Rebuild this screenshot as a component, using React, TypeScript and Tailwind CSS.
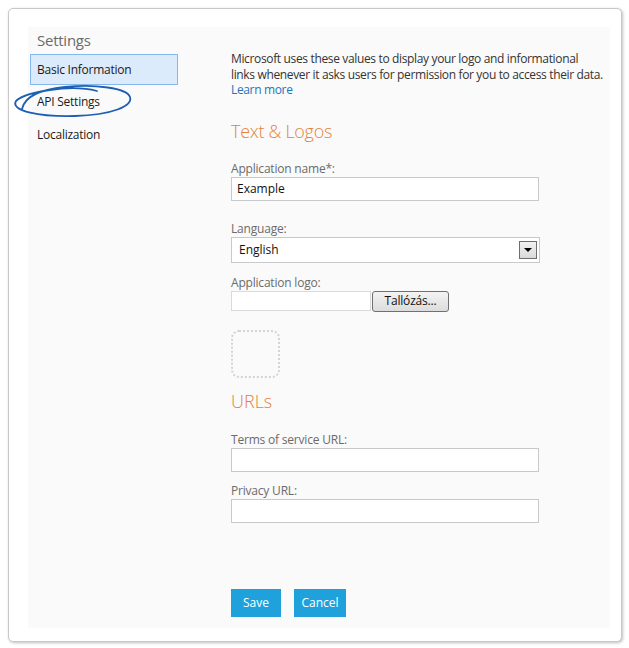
import React from "react";

const font = { fontFamily: '"Open Sans", "Noto Sans", Arial, sans-serif' };

function Field({ label, className = "", children }: { label: string; className?: string; children: React.ReactNode }) {
  return (
    <div className={className}>
      <div className="text-[12px] leading-[16px] tracking-[-0.2px] text-[#6b6b6b]">{label}</div>
      {children}
    </div>
  );
}

export default function App() {
  return (
    <div className="relative w-[629px] h-[648px] bg-white p-[8px]" style={font}>
      <div className="w-[614px] h-[634px] border border-[#c9c9c9] rounded-[5px] bg-white shadow-[1px_1px_3px_rgba(0,0,0,0.25)] pl-[19px] pr-[11px] pt-[18px] pb-[13px]">
        <div className="flex h-full bg-[#fafafa]">
          {/* Sidebar */}
          <div className="w-[203px] shrink-0 pt-[4px] tracking-[-0.25px]">
            <div className="pl-[9px] text-[15px] leading-[18px] text-[#6b6b6b]">Settings</div>
            <div className="ml-[2px] mt-[5px] w-[148px] h-[31px] border border-[#84b7ec] bg-[#dcebfc] flex items-center pl-[6px] text-[12px] text-[#1a1a1a]">
              Basic Information
            </div>
            <div className="pl-[9px] mt-[8px] h-[18px] flex items-center text-[12px] text-[#1a1a1a]">API Settings</div>
            <div className="pl-[9px] mt-[15px] h-[18px] flex items-center text-[12px] text-[#1a1a1a]">Localization</div>
          </div>

          {/* Main */}
          <div className="flex-1 pt-[24px]">
            <p className="text-[12px] leading-[15.5px] tracking-[-0.35px] text-[#333] w-[378px]">
              Microsoft uses these values to display your logo and informational
              <br />
              links whenever it asks users for permission for you to access their data.
              <br />
              <a className="text-[#1f74b8]">Learn more</a>
            </p>

            <h2 className="mt-[21px] text-[18px] leading-[24px] font-light tracking-[-0.3px] text-[#e3823e]">Text &amp; Logos</h2>

            <Field label="Application name*:" className="mt-[18px]">
              <div className="w-[308px] h-[24px] border border-[#c9c9c9] bg-white flex items-center pl-[5px] text-[12px] text-[#111]">
                Example
              </div>
            </Field>

            <Field label="Language:" className="mt-[20px]">
              <div className="w-[309px] h-[26px] border border-[#c9c9c9] bg-white flex items-center justify-between pl-[7px] pr-[2px] text-[12px] text-[#111]">
                English
                <div className="w-[18px] h-[18px] border border-[#6e6e6e] bg-gradient-to-b from-[#f2f2f2] to-[#d9d9d9] flex items-center justify-center">
                  <div className="w-0 h-0 border-l-[4px] border-r-[4px] border-t-[4px] border-l-transparent border-r-transparent border-t-black" />
                </div>
              </div>
            </Field>

            <Field label="Application logo:" className="mt-[12px]">
              <div className="flex items-center">
                <div className="w-[140px] h-[20px] border border-[#dadada] bg-white" />
                <div className="ml-[1px] w-[77px] h-[21px] border border-[#707070] rounded-[3px] bg-gradient-to-b from-[#f4f4f4] to-[#dcdcdc] flex items-center justify-center text-[12px] tracking-[-0.2px] text-[#111]">
                  Tallózás...
                </div>
              </div>
            </Field>

            <div className="mt-[18px] w-[49px] h-[48px] border-2 border-dotted border-[#d4d4d4] rounded-[8px]" />

            <h2 className="mt-[11px] text-[18px] leading-[24px] font-light text-[#e3823e]">URLs</h2>

            <Field label="Terms of service URL:" className="mt-[19px]">
              <div className="w-[308px] h-[24px] border border-[#c9c9c9] bg-white" />
            </Field>

            <Field label="Privacy URL:" className="mt-[11px]">
              <div className="w-[308px] h-[24px] border border-[#c9c9c9] bg-white" />
            </Field>

            <div className="mt-[66px] flex gap-[13px]">
              <button className="w-[50px] h-[28px] bg-[#1fa2dc] text-white text-[12px]">Save</button>
              <button className="w-[52px] h-[28px] bg-[#1fa2dc] text-white text-[12px]">Cancel</button>
            </div>
          </div>
        </div>
      </div>

      <svg className="absolute left-0 top-0 pointer-events-none" width="629" height="648" viewBox="0 0 629 648">
        <path
          d="M 97 91 C 70 84, 25 92, 16 101 C 10 111, 40 117, 75 116 C 112 115, 133 106, 130 97 C 127 88, 95 84, 65 87 C 45 89, 25 95, 22 109"
          fill="none"
          stroke="#1f5fb3"
          strokeWidth="1.8"
          strokeLinecap="round"
        />
      </svg>
    </div>
  );
}
